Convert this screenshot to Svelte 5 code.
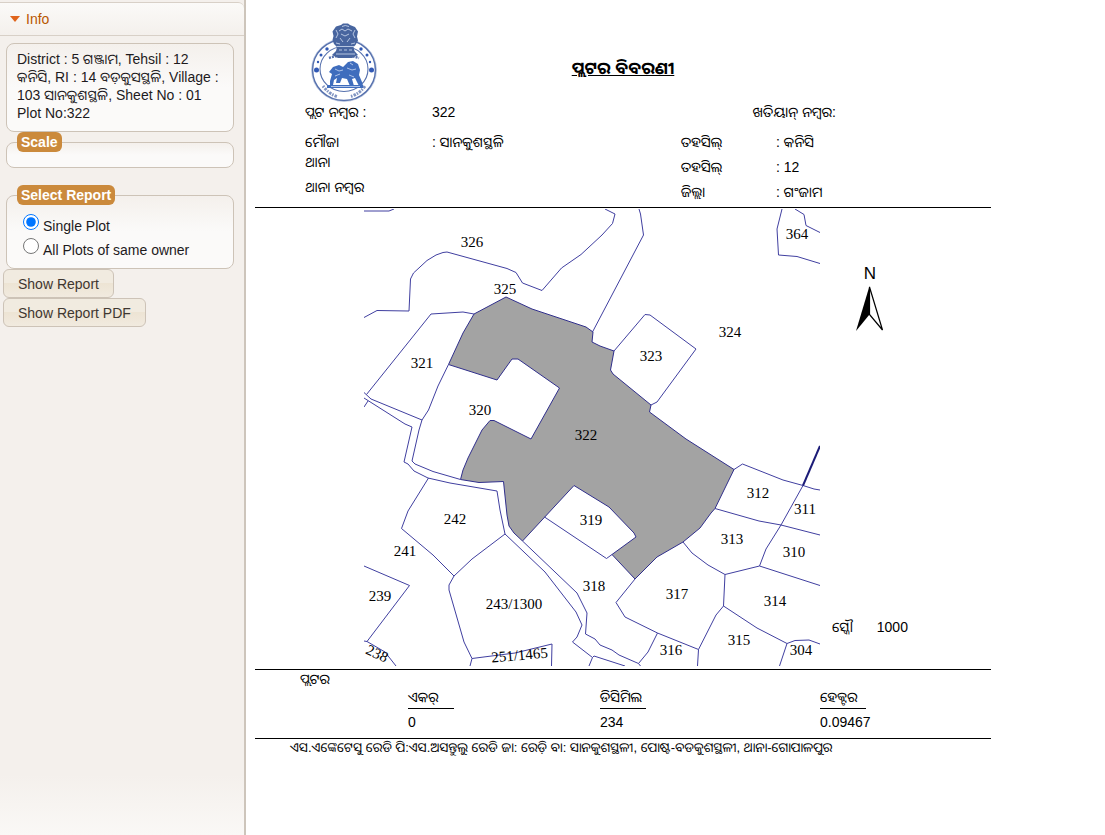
<script>
  let report = $state('single');

  const plot322 =
    '474,314 506,297 532,309 586,327 593,332 592,342 600,346 614,351 610.5,370 613,374 651,405 649.5,412 686,439 734,469.5 715,508.5 711,513 700,528 683,542 657,557 635,579 612,554.5 636,537 634,533 609,507 574,485.5 522.5,541 514,533 509,526 507,515 503.5,481.5 479,482.5 460.5,479.5 463,470 468,458 482,430 490,420.5 494,420.5 531,439 559.5,388 518,359 512,359 497,380 448.5,364.5 463,333';

  const boundaries = [
    '364,211 389,211 394,209',
    '364,317.5 377,310.5 409,311 410.5,279 413.5,273 427,260.5 436,255 443,252.5 447,252 507,268.5 516,272.5 522.5,283 542,290.5 561.5,268 581,254.5 602,235 612.5,223.5 615,214 605,209',
    '366.5,394.5 431,314 463,312 474,314',
    '364,392.5 371,399 422,420 428.5,410 438,386 448.5,364.5',
    '364,398 405,424 412,427 404,462 408,464 414,471 428,478 450,483 497,491 500,510 505,534',
    '364,407 368,401',
    '422,420 419,430 412,461 415,464 433,471.5 460.5,479.5',
    '522.5,541 577,593 587,613 585.5,634 595,639 600,645 612,650 619,655 638.5,663.5 648,652 657.5,633',
    '638.5,663.5 640.5,666',
    '505,534 545,572 576,612 582,625 577,637 572.5,642 592.5,657.5 589,666',
    '592.5,657.5 594,656 625,666',
    '544.5,517 606.5,558.5 612,554.5',
    '428.5,478 408,511 401.5,528.5 433,555 454,576 472,559 505,534',
    '454,576 449,585 449,590 464,642 472,658.5 470,666',
    '472,658.5 515,653 552,644 551.5,666',
    '364,566 409.5,585.5 367,641.5',
    '364,641 367,641.5 385,652 396,666',
    '614,351 645,314.5 650,315 696,349 657,402 651,405',
    '592.5,332 643.5,235 640.5,214 639,209',
    '782,209 777,229 778.5,255 797,256.5 820,263.5',
    '795,209 804,214.5 806,225.5 820,232.5',
    '734,469.5 742.5,464 783,480 803,485.5 814,489 820,490',
    '803,485.5 781,525 766,549 759.5,566',
    '715,508.5 759,521 781,525 820,535',
    '683,542 692,553 708,565 725,574.5 759.5,566 820,585.5',
    '725,574.5 723.5,606 716,615 698.5,649.5 697.5,666',
    '635,579 616,602.5 625,617 657.5,633 698.5,649.5',
    '723.5,606 757,628 787,643.5 779.5,666',
    '787,643.5 795,640.5 809,640 820,644'
  ];

  const labels = [
    ['326', 472, 247], ['364', 797, 239], ['325', 505, 294], ['324', 730, 337],
    ['323', 651, 361], ['321', 422, 368], ['320', 480, 415], ['322', 586, 440],
    ['312', 758, 498], ['311', 805, 514], ['319', 591, 525], ['242', 455, 524],
    ['313', 732, 544], ['310', 794, 557], ['241', 405, 556], ['239', 380, 601],
    ['318', 594, 591], ['317', 677, 599], ['243/1300', 514, 609], ['314', 775, 606],
    ['315', 739, 645], ['316', 671, 655], ['304', 801, 655],
    ['251/1465', 520, 660, -5], ['238', 375, 658, 25]
  ];
</script>

<div class="page">
  <aside>
    <h3><button type="button" class="toggle"><span class="arrow"></span>Info</button></h3>
    <div class="panel">
      <div class="box info">
        District : 5 ଗଞ୍ଜାମ, Tehsil : 12 କନିସି, RI : 14 ବଡ଼କୁସସ୍ଥଳି, Village : 103 ସାନକୁଶସ୍ଥଳି, Sheet No : 01 Plot No:322
      </div>
      <fieldset class="box scale"><legend>Scale</legend></fieldset>
      <fieldset class="box choose">
        <legend>Select Report</legend>
        <label><input type="radio" name="report" value="single" bind:group={report} /><span>Single Plot</span></label>
        <label><input type="radio" name="report" value="all" bind:group={report} /><span>All Plots of same owner</span></label>
      </fieldset>
    </div>
    <div class="actions">
      <button type="button">Show Report</button>
      <button type="button">Show Report PDF</button>
    </div>
  </aside>

  <main>
    <header>
      <div class="top">
        <svg class="emblem" viewBox="0 0 68 80" width="68" height="80" aria-hidden="true">
          <g fill="none" stroke="#5570ad">
            <ellipse cx="34" cy="48" rx="31.500" ry="30.500" stroke-width="1.600" />
            <ellipse cx="34" cy="48" rx="32.500" ry="31.500" stroke="#a9b8d8" stroke-width="0.600" />
            <ellipse cx="34" cy="47" rx="24" ry="22.500" stroke-width="1.100" />
            <path d="M13 64q6 8 14 10.500M41 74.500q9-3 14-10.500" stroke-width="3" stroke-dasharray="1.500 1.200 2.500 1" opacity=".75" />
            <path d="M19 36q15-5 30 0" stroke-width="2.400" stroke-dasharray="2 1" />
          </g>
          <g fill="#3159b5">
            <circle cx="6.500" cy="48" r="2.500" /><circle cx="61.500" cy="48" r="2.500" />
            <circle cx="8" cy="40" r="1.200" /><circle cx="60" cy="40" r="1.200" />
            <circle cx="11" cy="33" r="1.500" /><circle cx="57" cy="33" r="1.500" />
            <circle cx="17" cy="27" r="1.700" /><circle cx="51" cy="27" r="1.700" />
          </g>
          <path fill="#48659f" d="M31 3l2-1.500h5l2 1.500 5 2 3 4.500-1 5 1 4-2.500 4.500-2 2 1 4 3.500 4-6 3H28l-6-3 4-4 1-4-3-3-1.500-4 1-4-1-4.500 3.500-5z" />
          <g fill="none" stroke="#c3d0e8" stroke-width=".9">
            <path d="M32 4.500q3-2 7 0M29 9l3-2 3 2 3-2 4 2M26 8l2 4-2 4M45 8l-2 4 2 4M31 12l4 2 4-2M30 16l3 4M40 16l-3 4M26 21l4 1M41 22l4-1M27 24.500h17M29 28h3M34 28h3M39 28h3M26 32h19" />
          </g>
          <path fill="#3f6dbd" d="M20 63v-4l2-7-3-2 4-5 6-2 4 2 5-5 5-1 5 3 2 6-1 5 3 7 1 4h-4l-4-8-3 1 2 7h-4l-3-7-5-1-2 5h-4l1-5-3 2-1 5z" />
          <path fill="#3f6dbd" d="M17 63h36v3H17z" />
          <path d="M25 47l4 2 4-1M37 46l5 2 4-1M40 41l3 2M25 54l5-2M39 53l5 2M21 64.500h29" fill="none" stroke="#cad8f2" stroke-width=".8" />
        </svg>
        <h1>ପ୍ଲଟର ବିବରଣୀ</h1>
      </div>
      <div class="numbers">
        <span>ପ୍ଲଟ ନମ୍ବର :</span><span>322</span><span class="khata">ଖତିୟାନ୍ ନମ୍ବର:</span>
      </div>
      <div class="details">
        <dl class="left">
          <dt>ମୌଜା</dt><dd>: ସାନକୁଶସ୍ଥଳି</dd>
          <dt>ଥାନା</dt><dd></dd>
          <dt>ଥାନା ନମ୍ବର</dt><dd></dd>
        </dl>
        <dl class="right">
          <dt>ତହସିଲ୍</dt><dd>: କନିସି</dd>
          <dt>ତହସିଲ୍</dt><dd>: 12</dd>
          <dt>ଜିଲ୍ଲା</dt><dd>: ଗଂଜାମ</dd>
        </dl>
      </div>
    </header>

    <section class="map">
      <svg class="plan" viewBox="364 209 456 457" role="img" aria-label="Plot 322">
        <polygon points={plot322} fill="#a3a3a3" stroke="#302f8c" />
        <g fill="none" stroke="#403fa0">
          {#each boundaries as points}<polyline {points} />{/each}
        </g>
        <polyline class="heavy" points="820,446 803,485.5" fill="none" stroke="#1c1c78" />
        <g class="labels">
          {#each labels as [text, x, y, turn]}
            <text {x} {y} transform={turn ? `rotate(${turn} ${x} ${y})` : undefined}>{text}</text>
          {/each}
        </g>
      </svg>
      <div class="legend">
        <div class="north">
          <span>N</span>
          <svg viewBox="0 0 30 48" width="30" height="48" aria-hidden="true">
            <path d="M14.500 1L1 46 14.500 29.500z" fill="#000" />
            <path d="M14.500 2L27.500 45 14.500 29.500z" fill="#fff" stroke="#000" stroke-width="1.200" />
          </svg>
        </div>
        <p><span>ସ୍କୌ</span><span>1000</span></p>
      </div>
    </section>

    <section class="area">
      <h2>ପ୍ଲଟର</h2>
      <table>
        <thead><tr><th><span>ଏକର୍</span></th><th><span>ଡିସିମିଲ</span></th><th><span>ହେକ୍ଟର</span></th></tr></thead>
        <tbody><tr><td>0</td><td>234</td><td>0.09467</td></tr></tbody>
      </table>
    </section>
    <p class="owner">ଏସ.ଏଙ୍କେଟେସୁ ରେଡି ପି:ଏସ.ଅସନ୍ତୁଲୁ ରେଡି ଜା: ରେଡ଼ି ବା: ସାନକୁଶସ୍ଥଳୀ, ପୋଷ୍ଟ-ବଡକୁଶସ୍ଥଳୀ, ଥାନା-ଗୋପାଳପୁର</p>
  </main>
</div>

<style>
  :global(body) { margin: 0; background: #fff; }
  .page, .page :global(*) { box-sizing: border-box; }
  .page {
    display: flex;
    min-height: 100vh;
    font: 14px/18px "Liberation Sans", Arial, "Noto Sans Oriya", "Noto Sans", sans-serif;
    color: #000;
  }
  h1, h2, h3, p, dl, dd { margin: 0; font-weight: normal; }
  button { font: inherit; }

  aside {
    flex: 0 0 246px;
    padding-top: 2px;
    border-right: 2px solid #cdc5bb;
    background: linear-gradient(#f4f0ec calc(100% - 60px), #faf8f6);
    color: #1e1b1d;
  }
  h3 {
    border: solid #d8d0c7;
    border-width: 1px 0;
    border-radius: 0 6px 0 0;
    background: linear-gradient(#fbfaf8, #f4f0ec);
    font-size: 14px;
  }
  .toggle {
    display: flex;
    align-items: center;
    gap: 6px;
    width: 100%;
    height: 32px;
    padding: 0 10px;
    border: 0;
    background: none;
    color: #b85700;
  }
  .arrow { border: 5px solid transparent; border-top: 6px solid #e0641b; border-bottom: 0; }
  .panel { padding: 7px 10px 0 6px; }
  .box {
    min-width: 0;
    margin: 0;
    border: 1px solid #cdc3b7;
    border-radius: 8px;
    background: linear-gradient(#f4f0ec, #fbfaf9 50%);
  }
  .info { height: 89px; padding: 6px 10px; }
  legend {
    padding: 1px 4px;
    border-radius: 6px;
    background: #cb8a3c;
    color: #fff;
    font-weight: bold;
  }
  .scale { height: 36px; padding: 0 10px; }
  .choose { margin-top: 17px; padding: 6px 10px 9px; }
  label { display: flex; height: 24px; gap: 4px; padding-left: 6px; }
  label span { padding-top: 6px; }
  label input { width: 16px; height: 16px; margin: 3px 0 0; }
  .actions { display: flex; flex-direction: column; align-items: flex-start; padding-left: 3px; }
  .actions button {
    height: 29px;
    padding: 0 14px;
    border: 1px solid #cdc3b7;
    border-radius: 6px;
    background: linear-gradient(#f1ebe0 50%, #ede4d4 50%, #f1eadf);
    color: #3f3731;
  }

  main { flex: 1; min-width: 0; padding: 22px 114px 0 9px; }
  header { border-bottom: 1px solid #000; padding-bottom: 5px; }
  .top { display: grid; grid-template-columns: 1fr auto 1fr; }
  .emblem { margin-left: 55px; }
  h1 { padding-top: 36px; font-size: 17px; line-height: 22px; font-weight: bold; text-decoration: underline; }
  .numbers { display: flex; padding-left: 50px; line-height: 20px; }
  .numbers span:first-child { width: 127px; }
  .khata { margin-left: auto; margin-right: 155px; }
  .details { display: flex; justify-content: space-between; padding: 10px 120px 0 50px; }
  dl { display: grid; align-content: start; }
  .left { grid-template: 20px 25px 25px / 127px auto; line-height: 20px; }
  .right { grid-template: 25px 25px 20px / 95px 95px; line-height: 20px; }

  .map { display: flex; padding: 1px 0 3px 109px; }
  .plan { flex: 0 1 456px; min-width: 0; height: auto; }
  .plan polyline, .plan polygon { stroke-width: 1; }
  .plan .heavy { stroke-width: 2; }
  .labels { font: 15px "Liberation Serif", "Times New Roman", serif; text-anchor: middle; }
  .legend { display: flex; flex-direction: column; justify-content: space-between; padding: 54px 0 29px 12px; }
  .north { display: flex; flex-direction: column; align-items: center; width: 30px; margin-left: 23px; font-size: 17px; line-height: 22px; }
  .legend p { display: flex; gap: 24px; line-height: 20px; }

  .area { border: solid #000; border-width: 1px 0; height: 70px; }
  h2 { padding-left: 45px; font-size: 14px; line-height: 18px; }
  table { width: calc(100% - 153px); margin-left: 153px; border-collapse: collapse; table-layout: fixed; }
  th, td { padding: 0; text-align: left; font-weight: normal; }
  th:first-child { width: 192px; }
  th:nth-child(2) { width: 220px; }
  th span { display: block; width: 46px; height: 21px; border-bottom: 1px solid #000; white-space: nowrap; }
  td { line-height: 26px; }
  .owner { padding-left: 35px; font-size: 13px; line-height: 18px; white-space: nowrap; }
</style>
